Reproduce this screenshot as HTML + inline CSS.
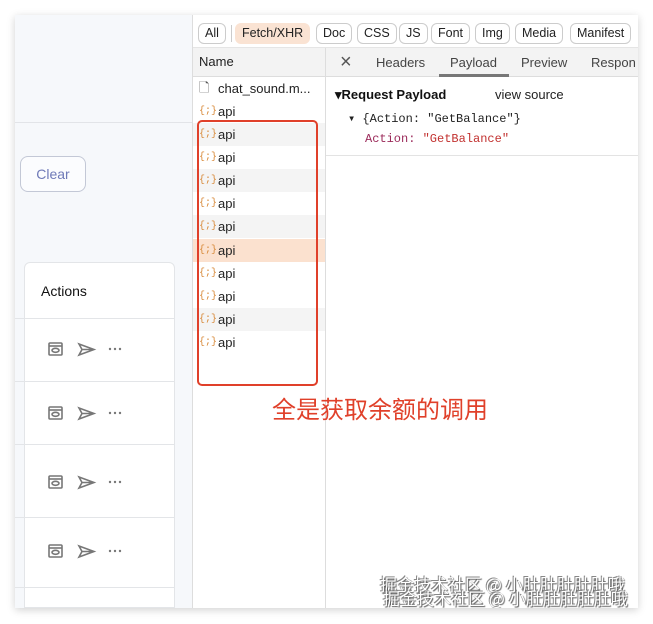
<!DOCTYPE html>
<html><head><meta charset="utf-8"><style>
*{margin:0;padding:0;box-sizing:border-box}
body{width:653px;height:624px;background:#fff;position:relative;overflow:hidden;font-family:"Liberation Sans",sans-serif}
.win{position:absolute;left:15px;top:15px;width:623px;height:593px;background:#fff;box-shadow:0 2px 8px rgba(0,0,0,.18);overflow:hidden}
.left{position:absolute;left:0;top:0;width:178px;height:593px;background:#f6f8fb}
.abs{position:absolute}
.chip{position:absolute;top:8px;height:21px;border:1px solid #ccc;border-radius:6px;font-size:12.5px;line-height:19px;padding:0 6px;color:#222;background:#fff}
.row{position:absolute;left:178px;width:132px;height:23px;font-size:13px;color:#222;line-height:23px;padding-left:25px}
.ic{position:absolute;left:6px;top:0;font-size:10px;color:#d88a3a;font-family:"Liberation Mono",monospace}
</style></head><body>
<div class="win">
 <div class="left">
  <div class="abs" style="left:0;top:107px;width:178px;height:1px;background:#e2e4e8"></div>
  <div class="abs" style="left:5px;top:141px;width:66px;height:36px;border:1px solid #c3c8d6;border-radius:8px;background:#fbfcfe;color:#6f7ab8;font-size:14px;line-height:34px;text-align:center">Clear</div>
  <div class="abs" style="left:9px;top:247px;width:151px;height:346px;background:#fff;border:1px solid #e3e5e8;border-radius:6px 6px 0 0"></div>
  <div class="abs" style="left:26px;top:268px;font-size:14px;color:#111">Actions</div>
  <div class="abs" style="left:0;top:303px;width:160px;height:1px;background:#e3e5e8"></div>
  <div class="abs" style="left:0;top:366px;width:160px;height:1px;background:#e3e5e8"></div>
  <div class="abs" style="left:0;top:429px;width:160px;height:1px;background:#e3e5e8"></div>
  <div class="abs" style="left:0;top:502px;width:160px;height:1px;background:#e3e5e8"></div>
  <div class="abs" style="left:0;top:572px;width:160px;height:1px;background:#e3e5e8"></div>
 </div>
 <svg class="abs" style="left:0;top:0" width="178" height="593">
  <g fill="none" stroke="#777" stroke-width="1.6">
   <g transform="translate(34,328)"><rect x="0" y="0" width="13" height="12" rx="1"/><line x1="0" y1="3" x2="13" y2="3"/><ellipse cx="6.5" cy="7.3" rx="3.5" ry="2"/></g>
   <g transform="translate(63,328)"><path d="M1 1 L16 6.5 L1 12 L4 6.5 Z M4 6.5 H16"/></g>
   <g transform="translate(34,392)"><rect x="0" y="0" width="13" height="12" rx="1"/><line x1="0" y1="3" x2="13" y2="3"/><ellipse cx="6.5" cy="7.3" rx="3.5" ry="2"/></g>
   <g transform="translate(63,392)"><path d="M1 1 L16 6.5 L1 12 L4 6.5 Z M4 6.5 H16"/></g>
   <g transform="translate(34,461)"><rect x="0" y="0" width="13" height="12" rx="1"/><line x1="0" y1="3" x2="13" y2="3"/><ellipse cx="6.5" cy="7.3" rx="3.5" ry="2"/></g>
   <g transform="translate(63,461)"><path d="M1 1 L16 6.5 L1 12 L4 6.5 Z M4 6.5 H16"/></g>
   <g transform="translate(34,530)"><rect x="0" y="0" width="13" height="12" rx="1"/><line x1="0" y1="3" x2="13" y2="3"/><ellipse cx="6.5" cy="7.3" rx="3.5" ry="2"/></g>
   <g transform="translate(63,530)"><path d="M1 1 L16 6.5 L1 12 L4 6.5 Z M4 6.5 H16"/></g>
  </g>
  <g fill="#777"><circle cx="95" cy="334" r="1.2"/><circle cx="100" cy="334" r="1.2"/><circle cx="105" cy="334" r="1.2"/>
  <circle cx="95" cy="398" r="1.2"/><circle cx="100" cy="398" r="1.2"/><circle cx="105" cy="398" r="1.2"/>
  <circle cx="95" cy="467" r="1.2"/><circle cx="100" cy="467" r="1.2"/><circle cx="105" cy="467" r="1.2"/>
  <circle cx="95" cy="536" r="1.2"/><circle cx="100" cy="536" r="1.2"/><circle cx="105" cy="536" r="1.2"/></g>
 </svg>
 <div class="abs" style="left:177px;top:0;width:1px;height:593px;background:#ddd"></div>
 <div class="abs" style="left:178px;top:0;width:445px;height:33px;background:#fff;border-bottom:1px solid #e5e5e5"></div>
 <div class="chip" style="left:183px">All</div>
 <div class="abs" style="left:216px;top:10px;width:1px;height:17px;background:#ccc"></div>
 <div class="chip" style="left:220px;background:#fae3d3;border-color:#fae3d3">Fetch/XHR</div>
 <div class="chip" style="left:301px">Doc</div>
 <div class="chip" style="left:342px">CSS</div>
 <div class="chip" style="left:384px">JS</div>
 <div class="chip" style="left:416px">Font</div>
 <div class="chip" style="left:460px">Img</div>
 <div class="chip" style="left:500px">Media</div>
 <div class="chip" style="left:555px">Manifest</div>
 <div class="abs" style="left:178px;top:33px;width:132px;height:29px;background:#f3f3f3;border-bottom:1px solid #ddd;font-size:13px;line-height:28px;padding-left:6px;color:#222">Name</div>
 <div class="abs" style="left:310px;top:33px;width:1px;height:560px;background:#ddd"></div>
 <div class="abs" style="left:311px;top:33px;width:312px;height:29px;background:#f3f3f3;border-bottom:1px solid #ddd"></div>
 <div class="abs" style="left:325px;top:36px;font-size:20px;color:#555;font-weight:300">×</div>
 <div class="abs" style="left:361px;top:40px;font-size:13px;color:#444">Headers</div>
 <div class="abs" style="left:435px;top:40px;font-size:13px;color:#444">Payload</div>
 <div class="abs" style="left:424px;top:59px;width:70px;height:3px;background:#777"></div>
 <div class="abs" style="left:506px;top:40px;font-size:13px;color:#444">Preview</div>
 <div class="abs" style="left:576px;top:40px;font-size:13px;color:#444;white-space:nowrap">Respon</div>
 <div class="abs" style="left:320px;top:72px;font-size:13px;font-weight:bold;color:#111">▾Request Payload</div>
 <div class="abs" style="left:480px;top:72px;font-size:13px;color:#222">view source</div>
 <div class="abs" style="left:333px;top:96px;font-size:12px;color:#222;font-family:'Liberation Mono',monospace">▾ {Action: "GetBalance"}</div>
 <div class="abs" style="left:350px;top:117px;font-size:12px;color:#9b2a5a;font-family:'Liberation Mono',monospace">Action: <span style="color:#c2312f">"GetBalance"</span></div>
 <div class="abs" style="left:311px;top:140px;width:312px;height:1px;background:#e3e3e3"></div>
 <div class="row" style="top:62px"><span class="ic" style="color:#555;font-size:13px">🗋</span>chat_sound.m...</div>
 <div class="row" style="top:85px"><span class="ic">{;}</span>api</div>
 <div class="row" style="top:108px;background:#f4f4f4"><span class="ic">{;}</span>api</div>
 <div class="row" style="top:131px"><span class="ic">{;}</span>api</div>
 <div class="row" style="top:154px;background:#f4f4f4"><span class="ic">{;}</span>api</div>
 <div class="row" style="top:177px"><span class="ic">{;}</span>api</div>
 <div class="row" style="top:200px;background:#f4f4f4"><span class="ic">{;}</span>api</div>
 <div class="row" style="top:224px;background:#fbe1cf"><span class="ic">{;}</span>api</div>
 <div class="row" style="top:247px"><span class="ic">{;}</span>api</div>
 <div class="row" style="top:270px"><span class="ic">{;}</span>api</div>
 <div class="row" style="top:293px;background:#f4f4f4"><span class="ic">{;}</span>api</div>
 <div class="row" style="top:316px"><span class="ic">{;}</span>api</div>
 <div class="abs" style="left:182px;top:105px;width:121px;height:266px;border:2px solid #e0402a;border-radius:5px"></div>
 <div class="abs" style="left:257px;top:382px;font-size:24px;line-height:28px;color:#e0402a;font-family:'Liberation Sans','Noto Sans CJK SC',sans-serif;white-space:nowrap">全是获取余额的调用</div>
 <div class="abs" style="left:365px;top:556px;font-size:17px;color:#fff;text-shadow:1px 1px 1px #555,-1px -1px 0 #888;font-family:'Noto Sans CJK SC',sans-serif;white-space:nowrap">掘金技术社区 @ 小肚肚肚肚肚哦</div>
 <div class="abs" style="left:368px;top:570px;font-size:17px;color:#fff;text-shadow:1px 1px 1px #555,-1px -1px 0 #888;font-family:'Noto Sans CJK SC',sans-serif;white-space:nowrap">掘金技术社区 @ 小肚肚肚肚肚哦</div>
</div>
</body></html>
